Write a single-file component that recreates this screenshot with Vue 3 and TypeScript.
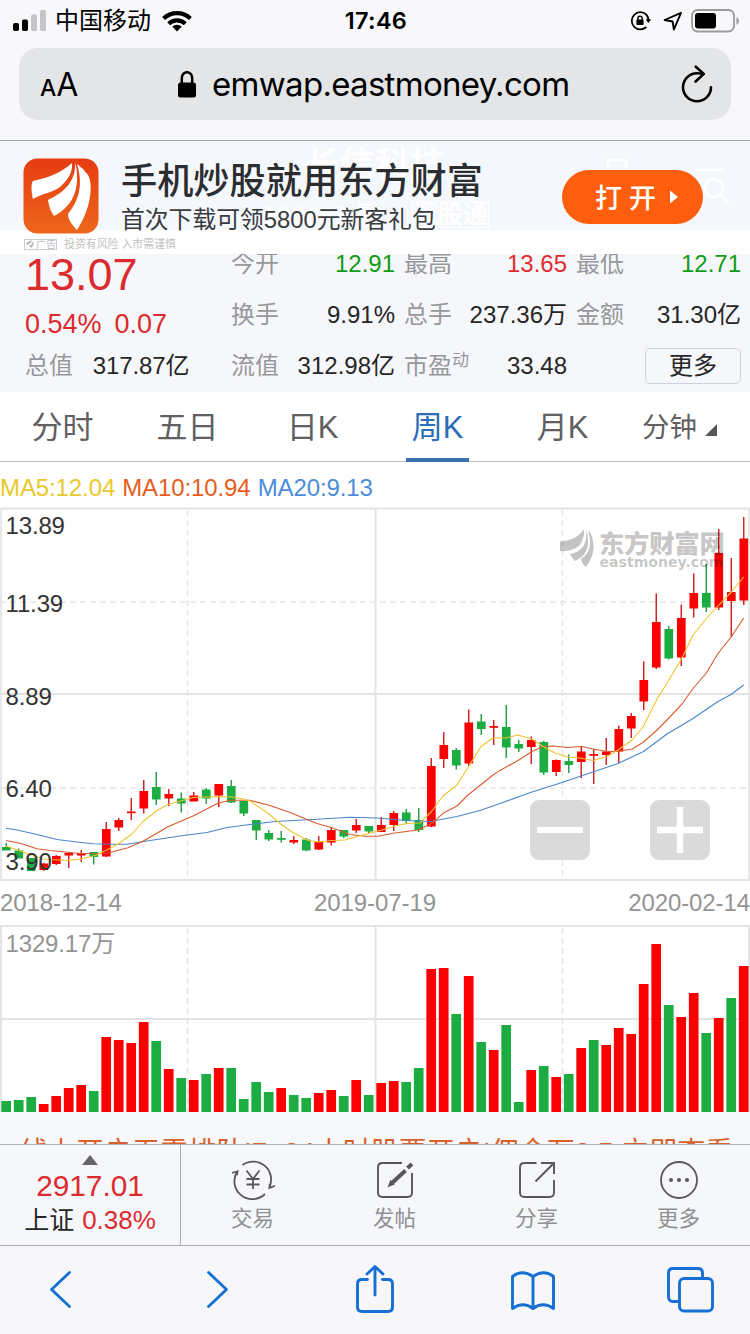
<script setup lang="ts">
type Candle = [up: 0 | 1, top: number, bottom: number, wickTop: number, wickBottom: number]

const PITCH = 12.5
const cx = (i: number) => 6.25 + i * PITCH

// Each entry: rising flag, body top, body bottom, wick top, wick bottom
const candles: Candle[] = [
  [0, 847, 850.5, 843, 850], [0, 850.5, 858.5, 848.5, 858], [0, 858, 871, 858, 871], [1, 863.5, 870, 863, 871],
  [1, 856, 864, 855, 865], [1, 853, 855.5, 852, 868], [1, 853, 855.5, 850, 862], [0, 852, 857, 852, 864.5],
  [1, 829, 856.5, 822, 857], [1, 820, 827.5, 818, 831], [1, 811.5, 813.2, 798, 820], [1, 791, 808.5, 780, 813.5],
  [0, 787, 799.5, 772, 805], [1, 794, 798.5, 789, 806], [0, 798.5, 803.5, 792.5, 812.5], [1, 795.5, 801.5, 792, 801],
  [0, 789.5, 798.5, 788, 804], [1, 784, 795.5, 784, 807], [0, 786, 802.5, 780, 803], [0, 801, 813.5, 801, 816],
  [0, 820, 830.5, 820, 840], [0, 833, 839.5, 830, 841], [0, 838, 839.8, 831, 842.5], [1, 840, 842.5, 836, 844],
  [0, 839.5, 850.5, 838, 851], [1, 842, 849.5, 836, 850], [1, 830, 842.5, 827, 845.5], [0, 830, 836.5, 830, 838],
  [1, 825, 830.5, 819, 833], [0, 826, 831.5, 826, 834], [1, 825, 832, 817, 832], [1, 813, 825, 811, 831],
  [0, 812.5, 821, 809, 824], [0, 820, 830, 808, 832], [1, 766, 826.5, 758, 827], [1, 745, 759, 732, 768],
  [0, 750, 765.5, 748, 769.5], [1, 722.5, 763.5, 709.5, 766], [0, 721.5, 729, 714, 735], [1, 726, 727.8, 720, 745],
  [0, 727, 747.5, 705, 758], [0, 744, 748.5, 740, 752], [1, 740, 747, 736.5, 764], [0, 742, 772.5, 741, 775],
  [1, 760, 772, 759.5, 776], [0, 761, 765, 754.5, 773], [1, 751.5, 762, 746, 778], [1, 754, 755.8, 749, 784],
  [1, 751.5, 755, 738, 765], [1, 729, 751.5, 725.5, 763], [1, 716, 728.5, 713, 738], [1, 680, 701.5, 661.5, 710],
  [1, 622, 667.5, 593.5, 669], [0, 629, 658.5, 626, 659.5], [1, 618, 657.5, 604.5, 666], [1, 593, 608.5, 573.5, 617.5],
  [0, 593, 607.5, 564, 612], [1, 553, 607.5, 529, 610], [1, 592, 601, 558, 637], [1, 538.5, 600.5, 517, 605],
]

const volumes: number[] = [
  11, 12, 15, 8, 16, 24, 27, 21, 75, 72, 69, 90, 71, 43, 34, 32, 38, 44, 44, 13, 30, 20, 24, 17, 14, 19, 22, 16, 32, 17,
  29, 31, 30, 44, 143, 144, 98, 136, 70, 62, 87, 10, 42, 46, 35, 38, 64, 72, 67, 84, 78, 128, 168, 107, 95, 119, 79, 94, 114, 146,
]
const volumeDir = 'GGGRRRRGRRRRGRGRGRGGGGRGGRRGRG' + 'RRGGRRGRGRGGRGRGRGRRRRRGRRGRGR'

const ma5 = '6,846 19,850.5 31,855 43,859 67,860.5 81,859 95,855.5 107,850 118,844 132,834 143,821.5 157,810.5 168,804.5 193,797.5 218,796.5 233,797 243,799 250,801 267,812.5 282,825 293,832.5 307,840 318,842 332,840.5 345,840 357,836.5 382,830 393,826.5 407,823.5 420,823 432,811 443,796 457,785 468,767.5 481,746.5 493,738 506,738 518,735 532,739 543,746.5 555,753 568,757 580,758 593,760.5 607,756.5 618,750 632,740 643,727 657,699 668,681.5 682,658 693,635 706,619 718,606 731,592.5 743.7,577'
const ma10 = '6,840.5 20,843.3 37,848.7 50,850.5 80,853.5 107,853.3 128,847.7 143,841.3 168,826.7 193,816 218,803.3 230,800.3 250,800.3 270,805.5 290,812.5 317,823.5 332,827.7 350,834.5 365,836.3 378,836.3 393,833.3 418,830 432,823.3 443,813.3 457,806 468,795 493,775 500,770.4 518,760.5 532,751.5 543,746.5 553,746 568,747.5 582,746.5 593,749 607,751.5 618,751.5 632,749 643,742.5 657,730 668,719 682,704 693,688.5 706,673.5 718,653.5 731.5,636.5 743.7,618'
const ma20 = '6,828.3 17,830 37,834.5 57,839.5 75,841.7 93,843.7 110,844.3 127,844.3 150,840.5 187,835 207,832.5 227,827.5 250,824.5 275,821.5 313,819.5 350,817.3 377,818 407,820.5 430,821.5 457,816.5 480,810.5 500,803.5 532,792 562,782.5 593,772 618,763.5 643.5,751.5 667,734 693,718.5 718,701.5 731,694.5 743.7,685'

const priceLabels = [
  { y: 534, t: '13.89' }, { y: 612, t: '11.39' }, { y: 705, t: '8.89' }, { y: 797, t: '6.40' }, { y: 870, t: '3.90' },
]

const stats = [
  [{ k: '今开', v: '12.91', c: 'down' }, { k: '最高', v: '13.65', c: 'up' }, { k: '最低', v: '12.71', c: 'down' }],
  [{ k: '换手', v: '9.91%', c: '' }, { k: '总手', v: '237.36万', c: '' }, { k: '金额', v: '31.30亿', c: '' }],
]
const tabs = ['分时', '五日', '日K', '周K', '月K']
</script>

<template>
  <div class="screen">
    <header class="status">
      <div class="st-left">
        <svg width="34" height="22" viewBox="0 0 34 22">
          <rect x="0" y="13" width="6" height="8" rx="1.8" /><rect x="9" y="9.500" width="6" height="11.500" rx="1.8" />
          <rect x="18" y="4.500" width="6" height="16.500" rx="1.8" fill="#c5c5c7" /><rect x="27" y="0" width="6" height="21" rx="1.8" fill="#c5c5c7" />
        </svg>
        <span class="carrier">中国移动</span>
        <svg class="wifi" width="30" height="22" viewBox="0 0 30 22" fill="none" stroke="#000" stroke-width="4.200">
          <path d="M1.600 8.500A19.500 19.500 0 0 1 28.400 8.500" /><path d="M6.700 13.800A12 12 0 0 1 23.300 13.800" />
          <path d="M15 21.500l-4.700-4.900a6.800 6.800 0 0 1 9.400 0z" fill="#000" stroke="none" />
        </svg>
      </div>
      <div class="clock">17:46</div>
      <div class="st-right">
        <svg width="22" height="20" viewBox="0 0 22 20" fill="none" stroke="#000" stroke-width="1.800">
          <path d="M16.300 3.600A8.600 8.600 0 1 0 16.300 16M16.300 3.600a8.600 8.600 0 0 1 2.100 5" />
          <path d="M15.600 8.200h5.600l-2.800 3.800z" fill="#000" stroke="none" />
          <rect x="6.400" y="8.600" width="7.200" height="5.400" rx=".8" fill="#000" stroke="none" />
          <path d="M7.900 9V7.300a2.100 2.100 0 0 1 4.200 0V9" stroke-width="1.400" />
        </svg>
        <svg width="20" height="20" viewBox="0 0 20 20" fill="none" stroke="#000" stroke-width="1.900" stroke-linejoin="round">
          <path d="M18 1.800L1.600 9l8 1.500 1.300 8z" />
        </svg>
        <svg width="48" height="24" viewBox="0 0 48 24">
          <rect x="1" y="1" width="42" height="21.500" rx="5.500" fill="none" stroke="#9a9a9c" stroke-width="1.800" />
          <rect x="4" y="4" width="21" height="15.500" rx="3" /><path d="M45.500 8v8q2.500-1.500 2.500-4t-2.500-4z" fill="#9a9a9c" />
        </svg>
      </div>
    </header>

    <div class="addr">
      <div class="aa"><span class="a1">A</span><span class="a2">A</span></div>
      <div class="url">
        <svg width="18" height="27" viewBox="0 0 18 27"><rect x="0" y="11.500" width="18" height="15" rx="2.500" /><path d="M3.800 13V7a5.200 5.800 0 0 1 10.400 0v6" fill="none" stroke="#000" stroke-width="2.500" /></svg>
        <span>emwap.eastmoney.com</span>
      </div>
      <svg class="reload" width="34" height="38" viewBox="0 0 34 38" fill="none" stroke="#000" stroke-width="2.600" stroke-linecap="round" stroke-linejoin="round">
        <path d="M22.500 8.700Q19.500 8.300 17 8.300A14 14 0 1 0 31 22.300" /><path d="M15.800 1.700l8 7.200-8.200 7.600" />
      </svg>
    </div>

    <section class="ad">
      <div class="ghost">
        <span class="g1">长信科技</span><span class="g2">300088 融</span><span class="g3">深股通</span>
        <svg class="g4" width="130" height="60" viewBox="0 0 130 60" fill="none" stroke="#fff" stroke-width="2.500"><path d="M4 10V2h18v8M90 12h30" /><circle cx="110" cy="30" r="9" /><path d="M117 37l8 8" /></svg>
      </div>
      <div class="ad-main">
        <svg class="logo" width="76" height="76" viewBox="0 0 76 76">
          <defs><linearGradient id="lg" x1="0" y1="0" x2="0" y2="1"><stop offset="0" stop-color="#e63c12" /><stop offset="1" stop-color="#ee661a" /></linearGradient></defs>
          <rect x=".5" y=".5" width="75" height="75" rx="14" fill="url(#lg)" />
          <g fill="#fff">
            <path d="M49 5C37 16 23 20 10 23C8 25 8 34 10 41C18 36 31 34 37 29C45 22 50 14 49 5Z" />
            <path d="M52 5C53 21 44 33 25 42C26 49 28 54 31 58C47 50 55 35 54 18Q54 10 52 5Z" />
            <path d="M54 6C62 32 52 47 45 56C45 62 50 68 54 72C67 53 71 27 65 17Q60 10 54 6Z" />
          </g>
        </svg>
        <div class="ad-text">
          <div class="ad-title">手机炒股就用东方财富</div>
          <div class="ad-sub">首次下载可领5800元新客礼包</div>
        </div>
        <div class="open">打<i></i>开<svg width="10" height="14" viewBox="0 0 10 14"><path d="M1 0.500L9 7L1 13.500z" fill="#fff" /></svg></div>
      </div>
      <div class="ad-foot">
        <span class="tag"><svg width="10" height="8" viewBox="0 0 10 8"><path d="M0 3L6 0Q5 4 1 5zM7 0q2 5-2 8l-2-2q4-2 4-6z" fill="#b8b8b8" /></svg>广告</span>
        <span>投资有风险 入市需谨慎</span>
      </div>
    </section>

    <section class="quote">
      <div class="left">
        <div class="price">13.07</div>
        <div class="chg"><span>0.54%</span><span>0.07</span></div>
        <div class="cap"><span class="k">总值</span><span>317.87亿</span></div>
      </div>
      <div class="grid">
        <div v-for="(row, r) in stats" :key="r" class="row">
          <div v-for="s in row" :key="s.k" class="cell"><span class="k">{{ s.k }}</span><span :class="s.c">{{ s.v }}</span></div>
        </div>
        <div class="row">
          <div class="cell"><span class="k">流值</span><span>312.98亿</span></div>
          <div class="cell"><span class="k">市盈<sup>动</sup></span><span>33.48</span></div>
          <div class="cell end"><span class="more">更多</span></div>
        </div>
      </div>
    </section>

    <nav class="tabs">
      <div v-for="t in tabs" :key="t" class="tab" :class="{ on: t === '周K' }">{{ t }}</div>
      <div class="tab min">分钟<svg width="12" height="12" viewBox="0 0 12 12"><path d="M12 0V12H0z" fill="#58585a" /></svg></div>
    </nav>

    <div class="legend"><span class="m5">MA5:12.04</span><span class="m10">MA10:10.94</span><span class="m20">MA20:9.13</span></div>

    <div class="kline">
      <svg width="750" height="376" viewBox="0 506 750 376">
        <g stroke="#e4e4e4" fill="none">
          <path d="M0 508.500H750M0 880H750" stroke-width="2" /><path d="M1 508V880M749 508V880" stroke-width="2" stroke="#e8e8ea" />
          <path d="M0 694H750M375.500 508V880" stroke-width="2" />
          <path d="M0 602H750M0 788H750M187.500 510V880M562.500 510V880" stroke-width="1.600" stroke-dasharray="6 4" stroke="#e6e6e6" />
        </g>
        <g v-for="(c, i) in candles" :key="i" :fill="c[0] ? '#fa0000' : '#1cac41'" :stroke="c[0] ? '#d01818' : '#1c9c3c'">
          <line :x1="cx(i)" :x2="cx(i)" :y1="c[3]" :y2="c[4]" stroke-width="1.400" />
          <rect :x="cx(i) - 4.3" :y="c[1]" width="8.700" :height="c[2] - c[1]" stroke="none" />
        </g>
        <g fill="#000" fill-opacity=".235">
          <path d="M584 529C578 538 569 541 560 541.500V551Q572 552 580 545Q585 537 584 529Z" />
          <path d="M586 530C588 546 580 552 570 554Q572 558 575 561Q589 555 588 540Q588 534 586 530Z" />
          <path d="M588 530C593 548 588 554 581 559Q582 564 586 567Q596 553 593 541Q592 534 588 530Z" />
          <text x="599" y="553" class="wm1" textLength="126">东方财富网</text>
          <text x="599.500" y="567" class="wm2" textLength="124" lengthAdjust="spacingAndGlyphs">eastmoney.com</text>
        </g>
        <g fill="none" stroke-width="1.100" stroke-linejoin="round">
          <polyline :points="ma20" stroke="#4a86cc" /><polyline :points="ma10" stroke="#dc5a2c" /><polyline :points="ma5" stroke="#f0c42c" />
        </g>
        <text v-for="p in priceLabels" :key="p.t" x="5.500" :y="p.y" class="axis">{{ p.t }}</text>
        <g><rect x="530" y="800" width="60" height="60" rx="9" fill="#d6d6d6" fill-opacity=".9" /><rect x="537" y="827" width="46" height="6" fill="#fff" /></g>
        <g><rect x="650" y="800" width="60" height="60" rx="9" fill="#d6d6d6" fill-opacity=".9" /><path d="M657 830H703M680 807V853" stroke="#fff" stroke-width="6.500" /></g>
      </svg>
    </div>

    <div class="dates"><span>2018-12-14</span><span>2019-07-19</span><span>2020-02-14</span></div>

    <svg class="vol" width="750" height="187" viewBox="0 925 750 187">
      <g stroke="#e4e4e4" fill="none" stroke-width="2">
        <path d="M0 926H750M0 1019H750M1 926V1112M375.500 926V1112M749 926V1112" />
        <path d="M187.500 928V1112M562.500 928V1112" stroke-width="1.600" stroke-dasharray="6 4" />
      </g>
      <text x="5.500" y="952" class="axis grey">1329.17万</text>
      <rect v-for="(v, i) in volumes" :key="i" :x="cx(i) - 4.9" :y="1112 - v" width="9.700" :height="v" :fill="volumeDir[i] === 'R' ? '#fa0000' : '#1cac41'" />
    </svg>

    <div class="ticker"><span>线上开户无需排队!7×24小时股票开户!佣金万2.5,立即查看</span></div>

    <section class="actions">
      <div class="index">
        <svg width="16" height="10" viewBox="0 0 16 10"><path d="M8 0L16 10H0z" fill="#666" /></svg>
        <div class="ix-val">2917.01</div>
        <div class="ix-sub"><b>上证</b><span>0.38%</span></div>
      </div>
      <div class="act">
        <svg width="44" height="40" viewBox="0 0 44 40" fill="none" stroke="#58585a" stroke-width="1.800">
          <path d="M11.500 5A18 18 0 0 1 38 28M1 13l5.500-1.800-.4 4M34 34A18 18 0 0 1 6.200 11.500M44 25.800l-5.600 2 .4-4" />
          <path d="M15.500 10.500l6.500 8.500 6.500-8.500M22 18.500V29M15.500 19h13M15.500 24.500h13" />
        </svg><span>交易</span>
      </div>
      <div class="act">
        <svg width="40" height="40" viewBox="0 0 40 40" fill="none" stroke="#58585a" stroke-width="1.900">
          <path d="M27 3H7.500Q3 3 3 7.500V32.500Q3 37 7.500 37H32.500Q37 37 37 32.500V13" />
          <path d="M17 23L30.500 10.500" stroke-width="4" /><path d="M15.800 21.500l-1.600 4 4-1.500z" fill="#58585a" /><path d="M32.500 8L37 4" stroke-width="4" />
        </svg><span>发帖</span>
      </div>
      <div class="act">
        <svg width="40" height="40" viewBox="0 0 40 40" fill="none" stroke="#58585a" stroke-width="1.900">
          <path d="M19.500 3H7.500Q3 3 3 7.500V32.500Q3 37 7.500 37H32.500Q37 37 37 32.500V20" /><path d="M24 3H37V14M37 3L18.500 21.500" />
        </svg><span>分享</span>
      </div>
      <div class="act">
        <svg width="40" height="40" viewBox="0 0 40 40"><circle cx="20" cy="20" r="18" fill="none" stroke="#58585a" stroke-width="1.800" /><g fill="#58585a"><circle cx="12" cy="20" r="2" /><circle cx="20" cy="20" r="2" /><circle cx="28" cy="20" r="2" /></g></svg><span>更多</span>
      </div>
    </section>

    <footer class="safari">
      <svg width="750" height="88" viewBox="0 1246 750 88" fill="none" stroke="#1670d4" stroke-width="2.900" stroke-linecap="round" stroke-linejoin="round">
        <path d="M69.500 1272.500L51.500 1289.500L69.500 1306.500" /><path d="M208.500 1272.500L226.500 1289.500L208.500 1306.500" />
        <path d="M367.500 1279.500H362Q357.500 1279.500 357.500 1284V1307Q357.500 1311.500 362 1311.500H388Q392.500 1311.500 392.500 1307V1284Q392.500 1279.500 388 1279.500H382.500M375 1295V1267M367 1274L375 1266.500L383 1274" />
        <path d="M533 1276.500Q522 1269 512.500 1276.500V1308.500Q523 1301 533 1308.500Q543 1301 553.500 1308.500V1276.500Q544 1269 533 1276.500V1308.500" />
        <rect x="679.500" y="1278.500" width="33" height="32.500" rx="4.500" /><path d="M702.500 1277V1273Q702.500 1268.500 698 1268.500H673Q668.500 1268.500 668.500 1273V1296.500Q668.500 1301.500 673 1301.500H678" />
      </svg>
    </footer>
  </div>
</template>

<style>
body { margin: 0; background: #fff; }
</style>

<style scoped>
.screen { width: 750px; height: 1334px; overflow: hidden; background: #f8f8fb; font-family: "Liberation Sans", "Noto Sans CJK SC", sans-serif; color: #262626; display: flex; flex-direction: column; }
.screen > * { flex: none; }
svg { display: block; }
.status { height: 48px; display: grid; grid-template-columns: 1fr 100px 1fr; box-sizing: border-box; padding: 0 11px 8px 13px; align-items: center; color: #000; }
.st-left { display: flex; align-items: center; }
.carrier { font-size: 24px; margin-left: 8px; line-height: 40px; }
.wifi { margin-left: 11px; }
.clock { font: 600 23.500px/42px Inter, sans-serif; text-align: center; letter-spacing: .3px; }
.st-right { display: flex; justify-content: flex-end; align-items: center; gap: 11px; }
.st-right svg:last-child { margin-left: -3px; }
.addr { height: 72px; margin: 0 19px; width: 712px; border-radius: 19px; background: #e4e5e7; display: flex; align-items: center; box-sizing: border-box; padding: 0 17px 0 21px; font-family: Inter, sans-serif; color: #000; }
.aa { display: flex; align-items: baseline; width: 138px; }
.a1 { font-size: 23px; font-weight: 500; }
.a2 { font-size: 32px; }
.url { display: flex; align-items: center; gap: 16px; font-size: 33px; letter-spacing: -.7px; }
.reload { margin-left: auto; }
.ad { position: relative; margin-top: 20px; border-top: 1px solid #a2a5ad; height: 113px; background: #fff; overflow: hidden; }
.ad-main { position: relative; height: 89px; padding-left: 23px; display: flex; align-items: flex-start; }
.ghost { position: absolute; left: 0; top: 0; width: 750px; height: 89px; background: #f4f7fb; color: #fff; font-weight: 700; }
.ghost > * { position: absolute; white-space: nowrap; }
.g1 { left: 305px; top: -5px; font-size: 35px; }
.g2 { left: 262px; top: 54px; font-size: 26px; }
.g3 { left: 412px; top: 60px; font-size: 25px; line-height: 25px; border: 1px solid #fff; }
.g4 { left: 604px; top: 17px; }
.logo { margin-top: 17px; flex: none; }
.ad-text { margin: 14px 0 0 22px; width: 370px; white-space: nowrap; }
.ad-title { font-size: 36.200px; line-height: 46px; font-weight: 500; font-family: "Noto Sans CJK SC", sans-serif; color: #2c2d30; }
.ad-sub { font-size: 23.800px; line-height: 30px; padding-top: 4px; color: #3a3b3e; }
.open { margin: 29px 0 0 71px; width: 141px; height: 54px; border-radius: 27px; background: #ff5e0e; color: #fff; font: 500 27px/52px "Noto Sans CJK SC", sans-serif; display: flex; align-items: center; box-sizing: border-box; padding-left: 33px; }
.open i { width: 7px; }
.open svg { margin-left: 13px; }
.ad-foot { position: relative; display: flex; align-items: center; padding: 8px 0 0 24px; gap: 7px; font-size: 10.900px; line-height: 12px; color: #c0c0c0; }
.tag { border: 1px solid #ccc; display: flex; align-items: center; padding: 0 0 0 1px; line-height: 9px; width: 30px; font-size: 10px; }
.quote { height: 138px; background: #f6f7fa; display: flex; font-size: 24px; }
.left { width: 206px; padding-left: 25px; color: #dc2b2e; }
.price { font-size: 45px; line-height: 46px; margin-top: -2px; }
.chg { display: flex; gap: 13px; font-size: 27px; line-height: 36px; margin-top: 8px; }
.cap { display: flex; gap: 20px; color: #262626; margin-top: 6px; line-height: 36px; letter-spacing: -.1px; }
.k { color: #98989c; white-space: nowrap; }
.grid { width: 511px; margin-top: -16px; }
.row { display: grid; grid-template-columns: 164px 163px 165px; column-gap: 9px; height: 51px; align-items: center; }
.cell { display: flex; justify-content: space-between; align-items: center; white-space: nowrap; line-height: 36px; }
.end { justify-content: flex-end; }
.up { color: #e02c30; }
.down { color: #109c14; }
sup { font-size: 17px; line-height: 10px; vertical-align: 8px; }
.more { border: 1px solid #d0d0e0; border-radius: 5px; width: 94px; height: 34px; line-height: 34px; text-align: center; }
.tabs { height: 69px; border-bottom: 1px solid #c0c0c4; background: #fff; display: flex; font-size: 31px; color: #606062; }
.tab { width: 125px; box-sizing: border-box; padding-bottom: 4px; display: flex; align-items: center; justify-content: center; position: relative; }
.on { color: #2a6cb8; }
.on::after { content: ""; position: absolute; left: 31px; bottom: -1px; width: 63px; height: 4px; background: #3e70b0; }
.min { font-size: 27.500px; justify-content: flex-start; padding-left: 17px; }
.min svg { margin: 10px 0 0 8px; }
.legend { height: 44px; background: #fff; display: flex; gap: 7px; font-size: 24px; line-height: 51px; letter-spacing: -.1px; }
.m5 { color: #e8c92c; } .m10 { color: #e85c20; } .m20 { color: #4c8cd8; }
.kline { background: #fff; height: 376px; }
.axis { font-size: 24px; fill: #333; letter-spacing: -.15px; }
.grey { fill: #949494; }
.wm1 { font: 900 25.500px "Noto Sans CJK SC", sans-serif; }
.wm2 { font: 700 13.500px "DejaVu Sans", sans-serif; }
.dates { height: 43px; line-height: 42px; background: #fff; display: flex; justify-content: space-between; color: #949494; font-size: 24px; letter-spacing: -.1px; }
.vol { background: #fff; }
.ticker { height: 32px; overflow: hidden; background: #f6f8fb; color: #d8602c; font-size: 28px; white-space: nowrap; }
.ticker span { display: block; padding: 20px 0 0 20px; line-height: 42px; }
.actions { height: 102px; box-sizing: border-box; border-top: 1px solid #b4b5b8; border-bottom: 1px solid #aaabb0; background: #f6f7fa; display: flex; }
.index { width: 181px; border-right: 1px solid #aaabb0; display: flex; flex-direction: column; align-items: center; color: #dc2b2e; padding-top: 10px; box-sizing: border-box; }
.ix-val { font-size: 29.800px; line-height: 34px; margin-top: 4px; }
.ix-sub { display: flex; gap: 8px; font-size: 26px; line-height: 32px; margin-top: 1px; }
.ix-sub b { font-weight: 400; color: #262626; font-size: 25px; }
.act { width: 142px; display: flex; flex-direction: column; align-items: center; padding: 15px 0 0 1px; font-size: 21.500px; line-height: 38px; color: #909094; box-sizing: border-box; }
.safari { height: 88px; background: #f7f7f9; }
</style>
